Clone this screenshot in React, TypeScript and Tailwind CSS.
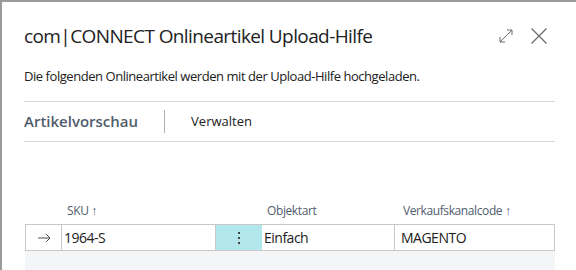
import React from "react";

export default function App() {
  const font = { fontFamily: '"Segoe UI", "Open Sans", "Noto Sans", sans-serif' };
  return (
    <div className="w-[576px] h-[270px] bg-[#9a9a9a] pt-[2px] pl-[2px] overflow-hidden" style={font}>
      <div className="w-full h-full bg-white flex flex-col pl-[22px] pr-[21px]">
        <div className="flex items-center justify-between h-[66px] pt-[2px]">
          <div className="text-[19px] text-[#212121] tracking-[-0.6px]">com|CONNECT Onlineartikel Upload-Hilfe</div>
          <div className="flex items-center gap-[16px] text-[#6b6b6b] mr-[7px]">
            <svg width="16" height="16" viewBox="0 0 16 16" fill="none" stroke="#6b6b6b" strokeWidth="1">
              <path d="M2 14 L14 2 M9 2 H14 V7 M2 9 V14 H7" />
            </svg>
            <svg width="18" height="18" viewBox="0 0 18 18" fill="none" stroke="#6b6b6b" strokeWidth="1.3">
              <path d="M1.5 1.5 L16.5 16.5 M16.5 1.5 L1.5 16.5" />
            </svg>
          </div>
        </div>
        <div className="text-[13px] text-[#212121] h-[33px] leading-[16px] tracking-[-0.45px]">Die folgenden Onlineartikel werden mit der Upload-Hilfe hochgeladen.</div>
        <div className="border-t border-b border-[#d6d6d6] h-[41px] flex items-center">
          <div className="text-[15px] font-semibold text-[#505c6d]">Artikelvorschau</div>
          <div className="w-px h-[23px] bg-[#b0b0b0] ml-[26px] mr-[26px]"></div>
          <div className="text-[13px] text-[#212121]">Verwalten</div>
        </div>
        <div className="h-[56px]"></div>
        <div className="flex text-[12px] text-[#505c6d] h-[26px] items-center tracking-[-0.4px]">
          <div className="w-[37px]"></div>
          <div className="w-[154px] pl-[6px]">SKU ↑</div>
          <div className="w-[46px]"></div>
          <div className="w-[133px] pl-[6px]">Objektart</div>
          <div className="flex-1 pl-[9px]">Verkaufskanalcode ↑</div>
        </div>
        <div className="flex border border-[#c8c8c8] h-[27px] text-[14px] text-[#212121] ml-px tracking-[-0.5px]">
          <div className="w-[36px] border-r border-[#c8c8c8] flex items-center justify-center text-[#505050]">
            <svg width="14" height="10" viewBox="0 0 14 10" fill="none" stroke="#505050" strokeWidth="1">
              <path d="M1 5 H13 M9 1 L13 5 L9 9" />
            </svg>
          </div>
          <div className="w-[154px] border-r border-[#c8c8c8] flex items-center pl-[2px]">1964-S</div>
          <div className="w-[46px] bg-[#b2e7ec] flex items-center justify-center">
            <div className="flex flex-col gap-[3px]">
              <div className="w-[2px] h-[2px] bg-[#444]"></div>
              <div className="w-[2px] h-[2px] bg-[#444]"></div>
              <div className="w-[2px] h-[2px] bg-[#444]"></div>
            </div>
          </div>
          <div className="w-[133px] border-r border-[#c8c8c8] flex items-center pl-[2px]">Einfach</div>
          <div className="flex-1 flex items-center pl-[6px]">MAGENTO</div>
        </div>
        <div className="flex-1 bg-[#f4f5f7] ml-px"></div>
      </div>
    </div>
  );
}
